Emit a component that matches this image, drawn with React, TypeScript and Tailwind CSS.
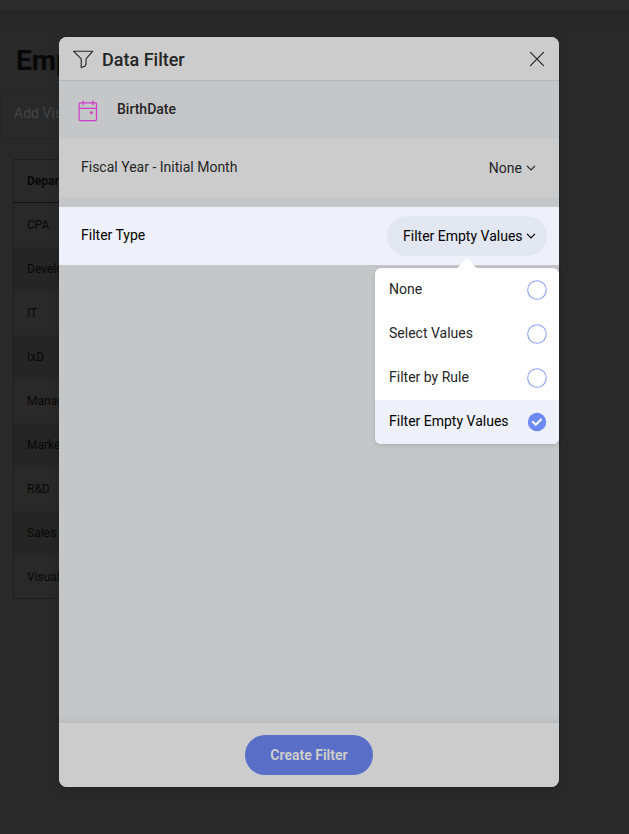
const FONT = "font-['Roboto','Noto_Sans',sans-serif]";

const departments = ["CPA", "Development", "IT", "IxD", "Management", "Marketing", "R&D", "Sales", "Visual Design"];
const options = ["None", "Select Values", "Filter by Rule", "Filter Empty Values"];

function Chevron() {
  return (
    <svg width="10" height="6" viewBox="0 0 10 6" fill="none" stroke="currentColor" strokeWidth="1.2" className="-mt-[2px] shrink-0">
      <path d="M1 0.8 L5 4.8 L9 0.8" />
    </svg>
  );
}

function FunnelIcon() {
  return (
    <svg width="22" height="19" viewBox="0 0 22 19" fill="none" stroke="#252525" strokeWidth="1.1" strokeLinejoin="round" className="mt-px">
      <path d="M1.5 1.2 H20.8 L14 8.8 V14.2 L13 16.2 L9.2 17.6 V8.8 Z" />
    </svg>
  );
}

function CalendarIcon() {
  return (
    <svg width="20" height="22" viewBox="0 0 20 22" fill="none" stroke="#cd3bc8" strokeWidth="1.2" className="mt-px">
      <rect x="1.1" y="2.8" width="17.4" height="17.8" rx="1.2" />
      <path d="M1.1 8.3 H18.5 M5.1 0.6 V5.6 M15 0.6 V5.6" />
      <rect x="12.4" y="11.7" width="2" height="2" rx="0.5" fill="#cd3bc8" stroke="#cd3bc8" strokeWidth="0.6" />
    </svg>
  );
}

function Report() {
  return (
    <div className="h-full w-full overflow-hidden bg-[#292929] text-[#080808]">
      <div className="h-[10px] bg-[#2b2b2b]" />
      <div className="h-5 bg-[#272727]" />
      <h1 className="w-[62px] overflow-hidden pl-4 pt-[13px] text-[28px] font-bold leading-9">Emp</h1>
      <div className="mt-[10px] flex h-[50px] w-[400px] items-center rounded-md border border-[#242424] pl-[13px] pb-[2px] text-[14px] text-[#444444]">
        Add Visualization
      </div>
      <div className="ml-[13px] mt-5 w-[500px] border border-[#1e1e1e] text-[12px]">
        <div className="flex h-[43px] items-center border-b border-[#111111] pl-[13px] font-bold">Department</div>
        {departments.map((name, i) => (
          <div
            key={name}
            className={`flex h-11 items-center pl-[13px] last:h-[43px] ${i % 2 === 1 ? "bg-[#252525]" : "bg-[#292929]"}`}
          >
            {name}
          </div>
        ))}
      </div>
    </div>
  );
}

function FilterMenu() {
  return (
    <div className="absolute left-[316px] top-[231px] w-[184px] rounded-md bg-white shadow-[0_1px_4px_rgba(0,0,0,0.14)]">
      <svg className="absolute -top-[10px] left-[82px]" width="20" height="11" viewBox="0 0 20 11">
        <path d="M0 10.5 L8.8 1.2 Q10 0 11.2 1.2 L20 10.5 Z" fill="#ffffff" />
      </svg>
      <div className="overflow-hidden rounded-md">
        {options.map((label, i) => (
          <div
            key={label}
            className={`flex h-11 items-center justify-between pl-[14px] pr-3 text-[14px] ${i === 3 ? "bg-[#eef1f9] text-black" : "text-[#252525]"}`}
          >
            <span className="-mt-px whitespace-nowrap">{label}</span>
            {i === 3 ? (
              <svg width="20" height="20" viewBox="0 0 20 20">
                <circle cx="10" cy="10" r="9.2" fill="#6d89f3" />
                <path d="M5.2 9.2 L8.8 12.7 L14.6 7" fill="none" stroke="#ffffff" strokeWidth="2" />
              </svg>
            ) : (
              <svg width="20" height="20" viewBox="0 0 20 20">
                <circle cx="10" cy="10" r="9.3" fill="none" stroke="#8ba1f8" strokeWidth="1.1" />
              </svg>
            )}
          </div>
        ))}
      </div>
    </div>
  );
}

function FilterDialog() {
  return (
    <div className="absolute left-[59px] top-[37px] h-[750px] w-[500px] text-[#252525]">
      <div className="flex h-full flex-col overflow-hidden rounded-lg bg-[#c5c6c8] shadow-[0_2px_12px_rgba(0,0,0,0.12)]">
        <header className="flex h-11 shrink-0 items-center border-b border-[#b7b7b8] bg-[#cccccc] pl-[13px] pr-[14px]">
          <FunnelIcon />
          <h2 className="ml-2 flex-1 pt-[2px] text-[18px] font-medium leading-6">Data Filter</h2>
          <svg width="16" height="16" viewBox="0 0 16 16" stroke="#252525" strokeWidth="1.2">
            <path d="M1.2 1.2 L14.8 14.8 M14.8 1.2 L1.2 14.8" />
          </svg>
        </header>
        <div className="flex h-[58px] shrink-0 items-center pl-[19px]">
          <CalendarIcon />
          <span className="-mt-px ml-[19px] text-[14px] font-medium">BirthDate</span>
        </div>
        <div className="flex h-[58px] shrink-0 items-center justify-between bg-[#cccccc] pl-[22px] pr-[23px] text-[14px]">
          <span className="-mt-px">Fiscal Year - Initial Month</span>
          <span className="flex items-center gap-1 pt-px">
            None
            <Chevron />
          </span>
        </div>
        <div className="mt-[10px] flex h-[58px] shrink-0 items-center justify-between bg-[#eef1f9] pl-[22px] pr-3 text-[14px] text-black">
          <span className="-mt-px">Filter Type</span>
          <span className="flex h-10 w-40 items-center gap-[3px] rounded-full bg-[#e3e7f2] pl-4 pt-px whitespace-nowrap">
            Filter Empty Values
            <Chevron />
          </span>
        </div>
        <div className="flex-1" />
        <footer className="flex h-16 shrink-0 items-center justify-center bg-[#cccccc] shadow-[0_-1px_8px_rgba(0,0,0,0.1)]">
          <button className="h-10 w-32 rounded-full bg-[#586ec7] pt-px text-[14px] font-bold text-[#cccccc]">Create Filter</button>
        </footer>
      </div>
      <FilterMenu />
    </div>
  );
}

export default function App() {
  return (
    <div className={`relative h-[834px] w-[629px] overflow-hidden ${FONT}`}>
      <Report />
      <FilterDialog />
    </div>
  );
}
